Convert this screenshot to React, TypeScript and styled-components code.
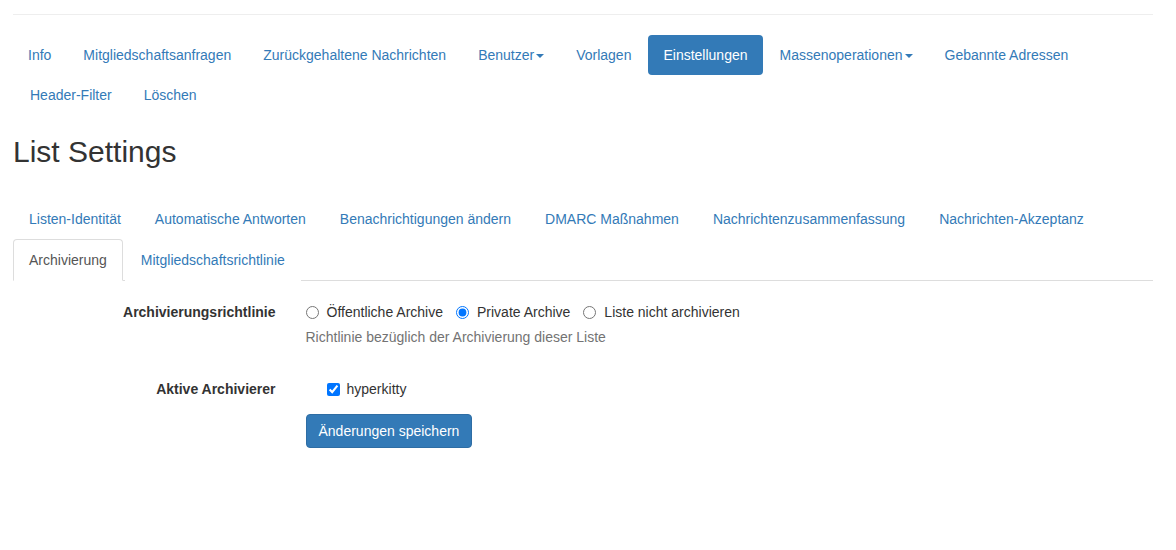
import React from "react";
import styled, { createGlobalStyle } from "styled-components";

const Global = createGlobalStyle`
  html, body { margin: 0; padding: 0; background: #fff; }
  body {
    font-family: "Liberation Sans", Arial, Helvetica, sans-serif;
    font-size: 14px;
    line-height: 20px;
    color: #333;
  }
  * { box-sizing: border-box; }
`;

const Page = styled.div`
  width: 1140px;
  margin-left: 13px;
  padding-top: 14px;
`;

const Rule = styled.hr`
  margin: 0 0 20px;
  border: 0;
  border-top: 1px solid #eee;
  height: 0;
`;

const Pills = styled.ul`
  list-style: none;
  margin: 0;
  padding: 0;
  display: flex;
  flex-wrap: wrap;
`;

const PillItem = styled.li`
  margin-left: 2px;
  &:first-child { margin-left: 0; }
`;

const PillLink = styled.a<{ $active?: boolean }>`
  display: block;
  padding: 10px 15px;
  line-height: 20px;
  border-radius: 4px;
  text-decoration: none;
  color: ${(p) => (p.$active ? "#fff" : "#337ab7")};
  background: ${(p) => (p.$active ? "#337ab7" : "transparent")};
  cursor: pointer;
`;

const Caret = styled.span`
  display: inline-block;
  width: 0;
  height: 0;
  margin-left: 2px;
  vertical-align: middle;
  border-top: 4px solid #337ab7;
  border-left: 4px solid transparent;
  border-right: 4px solid transparent;
`;

const Title = styled.h1`
  font-size: 30px;
  font-weight: 500;
  line-height: 1.1;
  margin: 20px 0 30px;
  color: #333;
`;

const Tabs = styled.ul`
  list-style: none;
  margin: 0;
  padding: 0;
  display: flex;
  flex-wrap: wrap;
  border-bottom: 1px solid #ddd;
`;

const TabItem = styled.li`
  margin-bottom: -1px;
`;

const TabLink = styled.a<{ $active?: boolean }>`
  display: block;
  margin-right: 2px;
  padding: 10px 15px;
  line-height: 20px;
  border: 1px solid ${(p) => (p.$active ? "#ddd" : "transparent")};
  border-bottom-color: ${(p) => (p.$active ? "#fff" : "transparent")};
  border-radius: 4px 4px 0 0;
  background: #fff;
  color: ${(p) => (p.$active ? "#555" : "#337ab7")};
  text-decoration: none;
  cursor: pointer;
`;

const Form = styled.form`
  margin-top: 14px;
  margin-left: -15px;
  width: 1170px;
`;

const Group = styled.div`
  display: grid;
  grid-template-columns: 292.5px 1fr;
  margin-bottom: 15px;
`;

const Label = styled.label`
  padding: 7px 15px 0;
  text-align: right;
  font-weight: bold;
  line-height: 20px;
`;

const Control = styled.div`
  padding: 0 15px;
`;

const RadioRow = styled.div`
  display: flex;
  padding-top: 7px;
`;

const RadioLabel = styled.label`
  display: flex;
  align-items: center;
  margin-right: 13px;
  line-height: 20px;
  cursor: pointer;
`;

const Radio = styled.input`
  margin: 0 8px 0 0;
  width: 13px;
  height: 13px;
`;

const Help = styled.p`
  margin: 5px 0 10px;
  color: #737373;
`;

const CheckList = styled.div`
  padding-top: 7px;
  padding-left: 21px;
`;

const CheckLabel = styled.label`
  display: flex;
  align-items: center;
  line-height: 20px;
  cursor: pointer;
`;

const Check = styled.input`
  margin: 0 7px 0 0;
  width: 13px;
  height: 13px;
`;

const Button = styled.button`
  font-family: inherit;
  font-size: 14px;
  line-height: 20px;
  padding: 6px 12px;
  color: #fff;
  background: #337ab7;
  border: 1px solid #2e6da4;
  border-radius: 4px;
  cursor: pointer;
`;

const pills: { label: string; caret?: boolean; active?: boolean }[] = [
  { label: "Info" },
  { label: "Mitgliedschaftsanfragen" },
  { label: "Zurückgehaltene Nachrichten" },
  { label: "Benutzer", caret: true },
  { label: "Vorlagen" },
  { label: "Einstellungen", active: true },
  { label: "Massenoperationen", caret: true },
  { label: "Gebannte Adressen" },
  { label: "Header-Filter" },
  { label: "Löschen" },
];

const tabs = [
  "Listen-Identität",
  "Automatische Antworten",
  "Benachrichtigungen ändern",
  "DMARC Maßnahmen",
  "Nachrichtenzusammenfassung",
  "Nachrichten-Akzeptanz",
  "Archivierung",
  "Mitgliedschaftsrichtlinie",
];

export default function App() {
  return (
    <>
      <Global />
      <Page>
        <Rule />
        <Pills>
          {pills.map((p) => (
            <PillItem key={p.label}>
              <PillLink $active={p.active}>
                {p.label}
                {p.caret && <Caret />}
              </PillLink>
            </PillItem>
          ))}
        </Pills>
        <Title>List Settings</Title>
        <Tabs>
          {tabs.map((t) => (
            <TabItem key={t}>
              <TabLink $active={t === "Archivierung"}>{t}</TabLink>
            </TabItem>
          ))}
        </Tabs>
        <Form onSubmit={(e) => e.preventDefault()}>
          <Group>
            <Label>Archivierungsrichtlinie</Label>
            <Control>
              <RadioRow>
                <RadioLabel>
                  <Radio type="radio" name="archive" />
                  Öffentliche Archive
                </RadioLabel>
                <RadioLabel>
                  <Radio type="radio" name="archive" defaultChecked />
                  Private Archive
                </RadioLabel>
                <RadioLabel>
                  <Radio type="radio" name="archive" />
                  Liste nicht archivieren
                </RadioLabel>
              </RadioRow>
              <Help>Richtlinie bezüglich der Archivierung dieser Liste</Help>
            </Control>
          </Group>
          <Group>
            <Label>Aktive Archivierer</Label>
            <Control>
              <CheckList>
                <CheckLabel>
                  <Check type="checkbox" defaultChecked />
                  hyperkitty
                </CheckLabel>
              </CheckList>
            </Control>
          </Group>
          <Group>
            <div />
            <Control>
              <Button type="submit">Änderungen speichern</Button>
            </Control>
          </Group>
        </Form>
      </Page>
    </>
  );
}
